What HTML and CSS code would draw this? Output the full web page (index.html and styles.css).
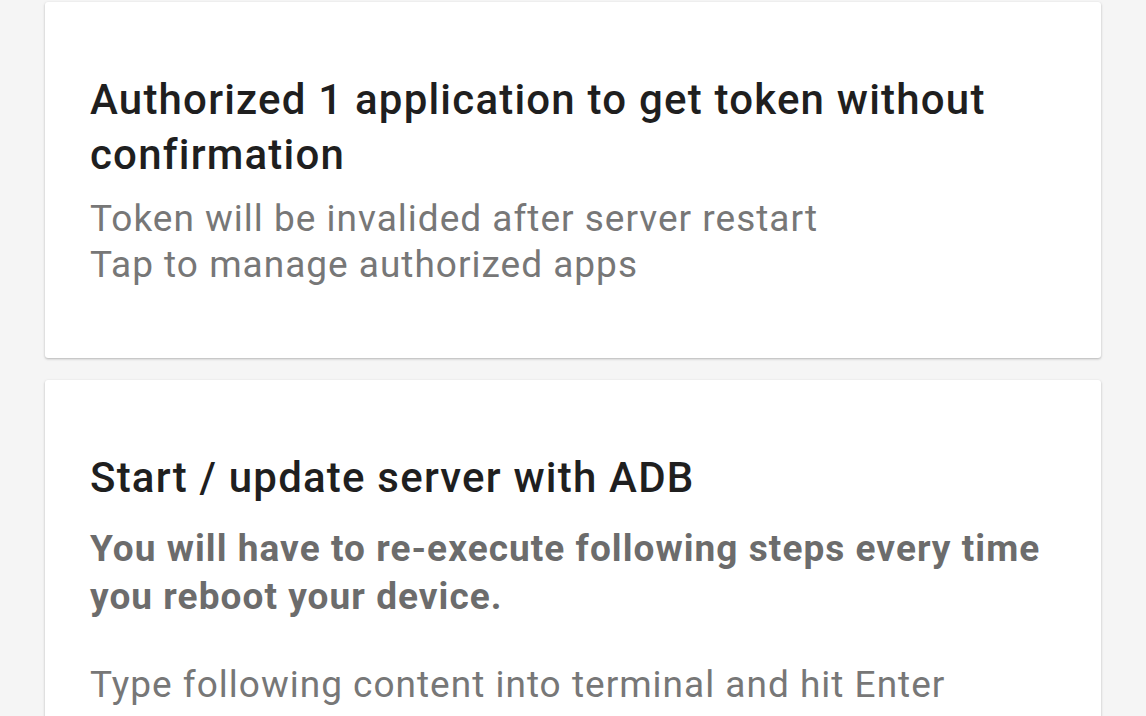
FILE: index.html
```html
<!DOCTYPE html>
<html>
<head>
<meta charset="utf-8">
<link rel="stylesheet" href="styles.css">
</head>
<body>
<div class="list">
  <div class="card card-first">
    <div class="title">Authorized 1 application to get token without confirmation</div>
    <div class="summary">Token will be invalided after server restart<br>Tap to manage authorized apps</div>
  </div>
  <div class="card card-second">
    <div class="title">Start / update server with ADB</div>
    <div class="warn">You will have to re-execute following steps every time you reboot your device.</div>
    <div class="summary step">Type following content into terminal and hit Enter</div>
  </div>
</div>
</body>
</html>
```
FILE: styles.css
```css
html, body {
  margin: 0;
  padding: 0;
  background: #f5f5f5;
  height: 100%;
  overflow: hidden;
}
body {
  font-family: Roboto, "Noto Sans", sans-serif;
}
.list {
  display: flex;
  flex-direction: column;
  gap: 22px;
  padding: 2px 45px 0 45px;
}
.card {
  background: #ffffff;
  border-radius: 3px;
  box-shadow: 0 1px 3px rgba(0,0,0,0.18), 0 1px 2px rgba(0,0,0,0.10);
  padding: 0 45px;
}
.card-first {
  height: 356px;
  box-sizing: border-box;
  padding-top: 70px;
}
.card-second {
  padding-top: 70px;
  min-height: 400px;
}
.title {
  font-size: 42px;
  line-height: 55px;
  font-weight: 500;
  letter-spacing: 1.2px;
  color: #1f1f1f;
}
.summary {
  font-size: 37px;
  line-height: 46px;
  letter-spacing: 1px;
  color: #777777;
  margin-top: 14px;
}
.warn {
  font-size: 37px;
  line-height: 48px;
  font-weight: 700;
  letter-spacing: 1.05px;
  color: #6c6c6c;
  margin-top: 20px;
}
.step {
  margin-top: 41px;
}
```
